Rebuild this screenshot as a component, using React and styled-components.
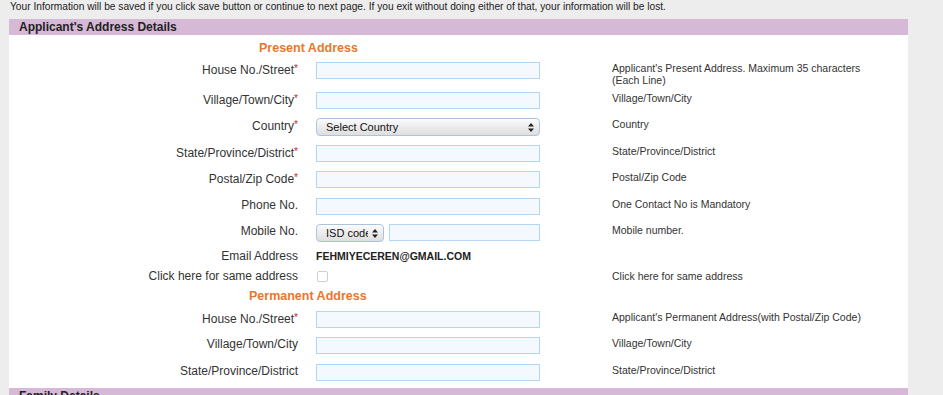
import React from 'react';
import styled, { createGlobalStyle } from 'styled-components';

const GlobalStyle = createGlobalStyle`
  html, body {
    margin: 0;
    padding: 0;
    background: #ededed;
    font-family: 'Liberation Sans', Arial, Helvetica, sans-serif;
    color: #333;
  }
`;

const Page = styled.div`
  width: 899px;
  margin-left: 9px;
  background: #fff;
  height: 395px;
  overflow: hidden;
`;

const Notice = styled.div`
  font-size: 10.2px;
  line-height: 14px;
  color: #222;
  white-space: nowrap;
  background: #ededed;
  margin-left: -9px;
  padding-left: 10px;
  padding-bottom: 5px;
  width: 943px;
`;

const SectionBar = styled.div`
  background: #d6b9d7;
  height: 16px;
  line-height: 16px;
  font-size: 12px;
  font-weight: bold;
  color: #222;
  padding-left: 10px;
`;

const SubHeading = styled.div`
  height: ${p => p.$h}px;
  padding-top: ${p => p.$pt}px;
  box-sizing: border-box;
  font-size: 12.5px;
  line-height: 14px;
  font-weight: bold;
  color: #e8772e;
  padding-left: ${p => p.$left}px;
`;

const Row = styled.div`
  display: flex;
  align-items: flex-start;
  height: ${p => p.$h}px;
`;

const Label = styled.div`
  width: 289px;
  margin-right: 18px;
  text-align: right;
  font-size: 12px;
  line-height: 14px;
  color: #333;
  white-space: nowrap;
  padding-top: ${p => p.$pt || 0}px;
`;

const Star = styled.span`
  color: #c0282d;
  font-size: 10px;
  vertical-align: 2px;
`;

const Field = styled.div`
  width: 224px;
  display: flex;
  gap: 5px;
`;

const TextBox = styled.div`
  flex: 1;
  height: 17px;
  box-sizing: border-box;
  border: 1px solid #b4d6f6;
  background: #f4f9ff;
`;

const SelectBox = styled.div`
  width: ${p => p.$w ? `${p.$w}px` : 'auto'};
  flex: ${p => p.$w ? 'none' : '1'};
  height: 18px;
  box-sizing: border-box;
  border: 1px solid #a9c4e0;
  border-radius: 4px;
  background: linear-gradient(#fbfbfb, #dedede);
  box-shadow: inset 0 1px 0 #fff;
  display: flex;
  align-items: center;
  gap: 4px;
  padding: 0 5px 0 9px;
  font-size: 11px;
  color: #111;
  overflow: hidden;
`;

const SelectText = styled.span`
  flex: 1;
  min-width: 0;
  white-space: nowrap;
  overflow: hidden;
`;

const Arrows = () => (
  <svg width="6" height="9" viewBox="0 0 6 9" style={{ flex: 'none' }}>
    <path d="M3 0 L6 3.5 H0 Z M3 9 L0 5.5 H6 Z" fill="#222" />
  </svg>
);

const Value = styled.div`
  font-size: 10.5px;
  line-height: 14px;
  font-weight: bold;
  color: #222;
`;

const Check = styled.div`
  width: 9px;
  height: 9px;
  margin: 2px 0 0 1px;
  border: 1px solid #cfcfcf;
  border-radius: 2px;
  background: #fff;
`;

const Help = styled.div`
  margin-left: 72px;
  width: 260px;
  font-size: 10.5px;
  line-height: 12px;
  color: #333;
  padding-top: ${p => p.$pt || 0}px;
`;

const Req = () => <Star>*</Star>;

const presentRows = [
  { label: 'House No./Street', req: true, help: "Applicant's Present Address. Maximum 35 characters (Each Line)", h: 30 },
  { label: 'Village/Town/City', req: true, help: 'Village/Town/City', h: 26 },
  { label: 'Country', req: true, help: 'Country', h: 27, select: 'Select Country' },
  { label: 'State/Province/District', req: true, help: 'State/Province/District', h: 26 },
  { label: 'Postal/Zip Code', req: true, help: 'Postal/Zip Code', h: 27 },
  { label: 'Phone No.', help: 'One Contact No is Mandatory', h: 26 },
  { label: 'Mobile No.', help: 'Mobile number.', h: 25, isd: true },
];

const permanentRows = [
  { label: 'House No./Street', req: true, help: "Applicant's Permanent Address(with Postal/Zip Code)", h: 26 },
  { label: 'Village/Town/City', help: 'Village/Town/City', h: 27 },
  { label: 'State/Province/District', help: 'State/Province/District', h: 24 },
];

const FormRow = ({ row }) => (
  <Row $h={row.h}>
    <Label>{row.label}{row.req && <Req />}</Label>
    <Field>
      {row.select && (
        <SelectBox>
          <SelectText>{row.select}</SelectText>
          <Arrows />
        </SelectBox>
      )}
      {row.isd && (
        <SelectBox $w={68}>
          <SelectText>ISD code</SelectText>
          <Arrows />
        </SelectBox>
      )}
      {!row.select && <TextBox />}
    </Field>
    <Help>{row.help}</Help>
  </Row>
);

export default function App() {
  return (
    <>
      <GlobalStyle />
      <Page>
        <Notice>
          Your Information will be saved if you click save button or continue to next page. If you exit without doing either of that, your information will be lost.
        </Notice>
        <SectionBar>Applicant's Address Details</SectionBar>
        <SubHeading $h={27} $pt={6} $left={250}>Present Address</SubHeading>
        {presentRows.map((r, i) => <FormRow key={i} row={r} />)}
        <Row $h={20}>
          <Label>Email Address</Label>
          <Field><Value>FEHMIYECEREN@GMAIL.COM</Value></Field>
        </Row>
        <Row $h={20}>
          <Label>Click here for same address</Label>
          <Field><Check /></Field>
          <Help $pt={1}>Click here for same address</Help>
        </Row>
        <SubHeading $h={22} $pt={0} $left={240}>Permanent Address</SubHeading>
        {permanentRows.map((r, i) => <FormRow key={i} row={r} />)}
        <SectionBar>Family Details</SectionBar>
      </Page>
    </>
  );
}
